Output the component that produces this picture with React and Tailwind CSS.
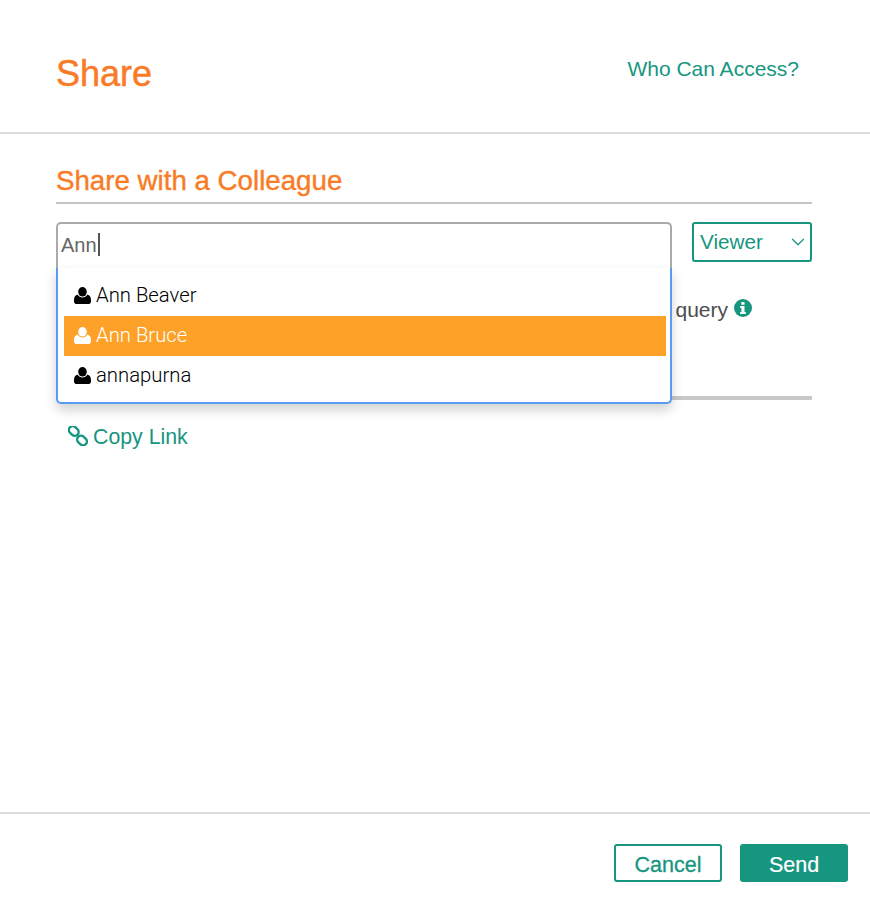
import { LuChevronDown } from "react-icons/lu";

const people = [
  { name: "Ann Beaver" },
  { name: "Ann Bruce", active: true },
  { name: "annapurna" },
];

function UserIcon() {
  return (
    <svg viewBox="0 0 17 17" className="w-[17px] h-[17px] shrink-0 -mt-[2px]" fill="currentColor">
      <ellipse cx="8.5" cy="4.8" rx="4.3" ry="4.8" />
      <path d="M3.600 7.600c1 2 2.900 3 4.900 3s3.900-1 4.900-3c2.200.5 3.600 2.600 3.600 5.600v1.200c0 1.500-1.100 2.600-2.600 2.600H2.600C1.100 17 0 15.900 0 14.400v-1.200c0-3 1.400-5.100 3.600-5.600z" />
    </svg>
  );
}

function ChainIcon() {
  return (
    <svg viewBox="0 0 20 20" className="w-[20px] h-[20px] shrink-0 -mt-[2px]" fill="none" stroke="currentColor" strokeWidth="2.4">
      <rect x="0.500" y="1.200" width="10.500" height="7.600" rx="3.800" transform="rotate(42 5.750 5)" />
      <rect x="8.750" y="10.700" width="10.500" height="7.600" rx="3.800" transform="rotate(42 14 14.500)" />
    </svg>
  );
}

function InfoIcon() {
  return (
    <svg viewBox="0 0 18 18" className="w-[18px] h-[18px] shrink-0 mt-[2px]">
      <circle cx="9" cy="9" r="9" fill="#16967f" />
      <path fill="#fff" d="M7.300 3h3.200v2.700H7.300zM6.200 7.100h4.300v6h1.300v2H6.200v-2h1.200V9.100H6.200z" />
    </svg>
  );
}

export default function App() {
  return (
    <div className="w-[870px] h-[902px] bg-white flex flex-col font-['Liberation_Sans',Arial,sans-serif] overflow-hidden">
      {/* Header */}
      <header className="h-[134px] shrink-0 border-b-2 border-[#dcdcdc] pl-14 pr-[71px] flex justify-between items-start">
        <h1 className="mt-[52px] text-[36px] leading-[44px] text-[#f97b26] [-webkit-text-stroke:0.5px_#f97b26]">Share</h1>
        <a className="mt-[56px] text-[21px] leading-[26px] text-[#16967f]">Who Can Access?</a>
      </header>

      {/* Body */}
      <main className="flex-1 pl-14 pr-[58px] pt-[29px]">
        <h2 className="text-[27.7px] leading-[36px] pb-[3px] border-b-2 border-[#c4c4c4] text-[#f97b26] [-webkit-text-stroke:0.4px_#f97b26]">
          Share with a Colleague
        </h2>

        <div className="relative">
          <div className="flex justify-between mt-[18px]">
            <div className="w-[616px] h-[48px] border-2 border-b-0 border-[#aaaaaa] rounded-t-[5px] pl-[3px] pt-[7px] text-[20px] leading-[28px] text-[#666666] flex items-start">
              Ann<span className="w-[2px] h-[23px] mt-[2px] ml-px bg-[#555555]" />
            </div>
            <div className="w-[120px] h-[40px] border-2 border-[#16967f] rounded-[3px] pl-[6px] pr-[1px] flex items-center justify-between text-[20.7px] text-[#16967f]">
              Viewer
              <LuChevronDown className="w-[22px] h-[22px]" strokeWidth={1.3} />
            </div>
          </div>

          {/* Field note, mostly covered by the suggestions */}
          <div className="mt-[27px] h-[103px] flex justify-end pr-[60px] text-[21px] leading-[26px] text-[#4d4d4d] border-b-4 border-[#c8c8c8]">
            <span className="flex items-start gap-[6px]">
              query
              <InfoIcon />
            </span>
          </div>

          {/* Suggestions */}
          <div className="absolute left-0 top-[46px] w-[616px] h-[136px] bg-white border-2 border-t-0 border-[#5b9bf5] rounded-b-[5px] shadow-[0_6px_12px_rgba(0,0,0,0.18)] pl-[6px] pr-[4px] pt-[8px]">
            {people.map((p) => (
              <div
                key={p.name}
                className={
                  "h-[40px] pl-[10px] flex items-center gap-[5px] text-[20.3px] font-['Roboto',sans-serif] font-light " +
                  (p.active ? "bg-[#fea128] text-white" : "text-black")
                }
              >
                <UserIcon />
                <span className="-mt-[2px]">{p.name}</span>
              </div>
            ))}
          </div>
        </div>

        <a className="mt-[24px] ml-[12px] flex items-center gap-[5px] text-[21.3px] leading-[26px] text-[#16967f]">
          <ChainIcon />
          Copy Link
        </a>
      </main>

      {/* Footer */}
      <footer className="h-[90px] shrink-0 border-t-2 border-[#dcdcdc] pr-[22px] pt-[30px] flex justify-end gap-[18px]">
        <button className="w-[108px] h-[38px] pt-[3px] border-2 border-[#16967f] rounded-[3px] text-[21.5px] text-[#16967f] [-webkit-text-stroke:0.3px_#16967f]">
          Cancel
        </button>
        <button className="w-[108px] h-[38px] pt-[4px] bg-[#16967f] rounded-[3px] text-[21.5px] text-white [-webkit-text-stroke:0.2px_#ffffff]">
          Send
        </button>
      </footer>
    </div>
  );
}
